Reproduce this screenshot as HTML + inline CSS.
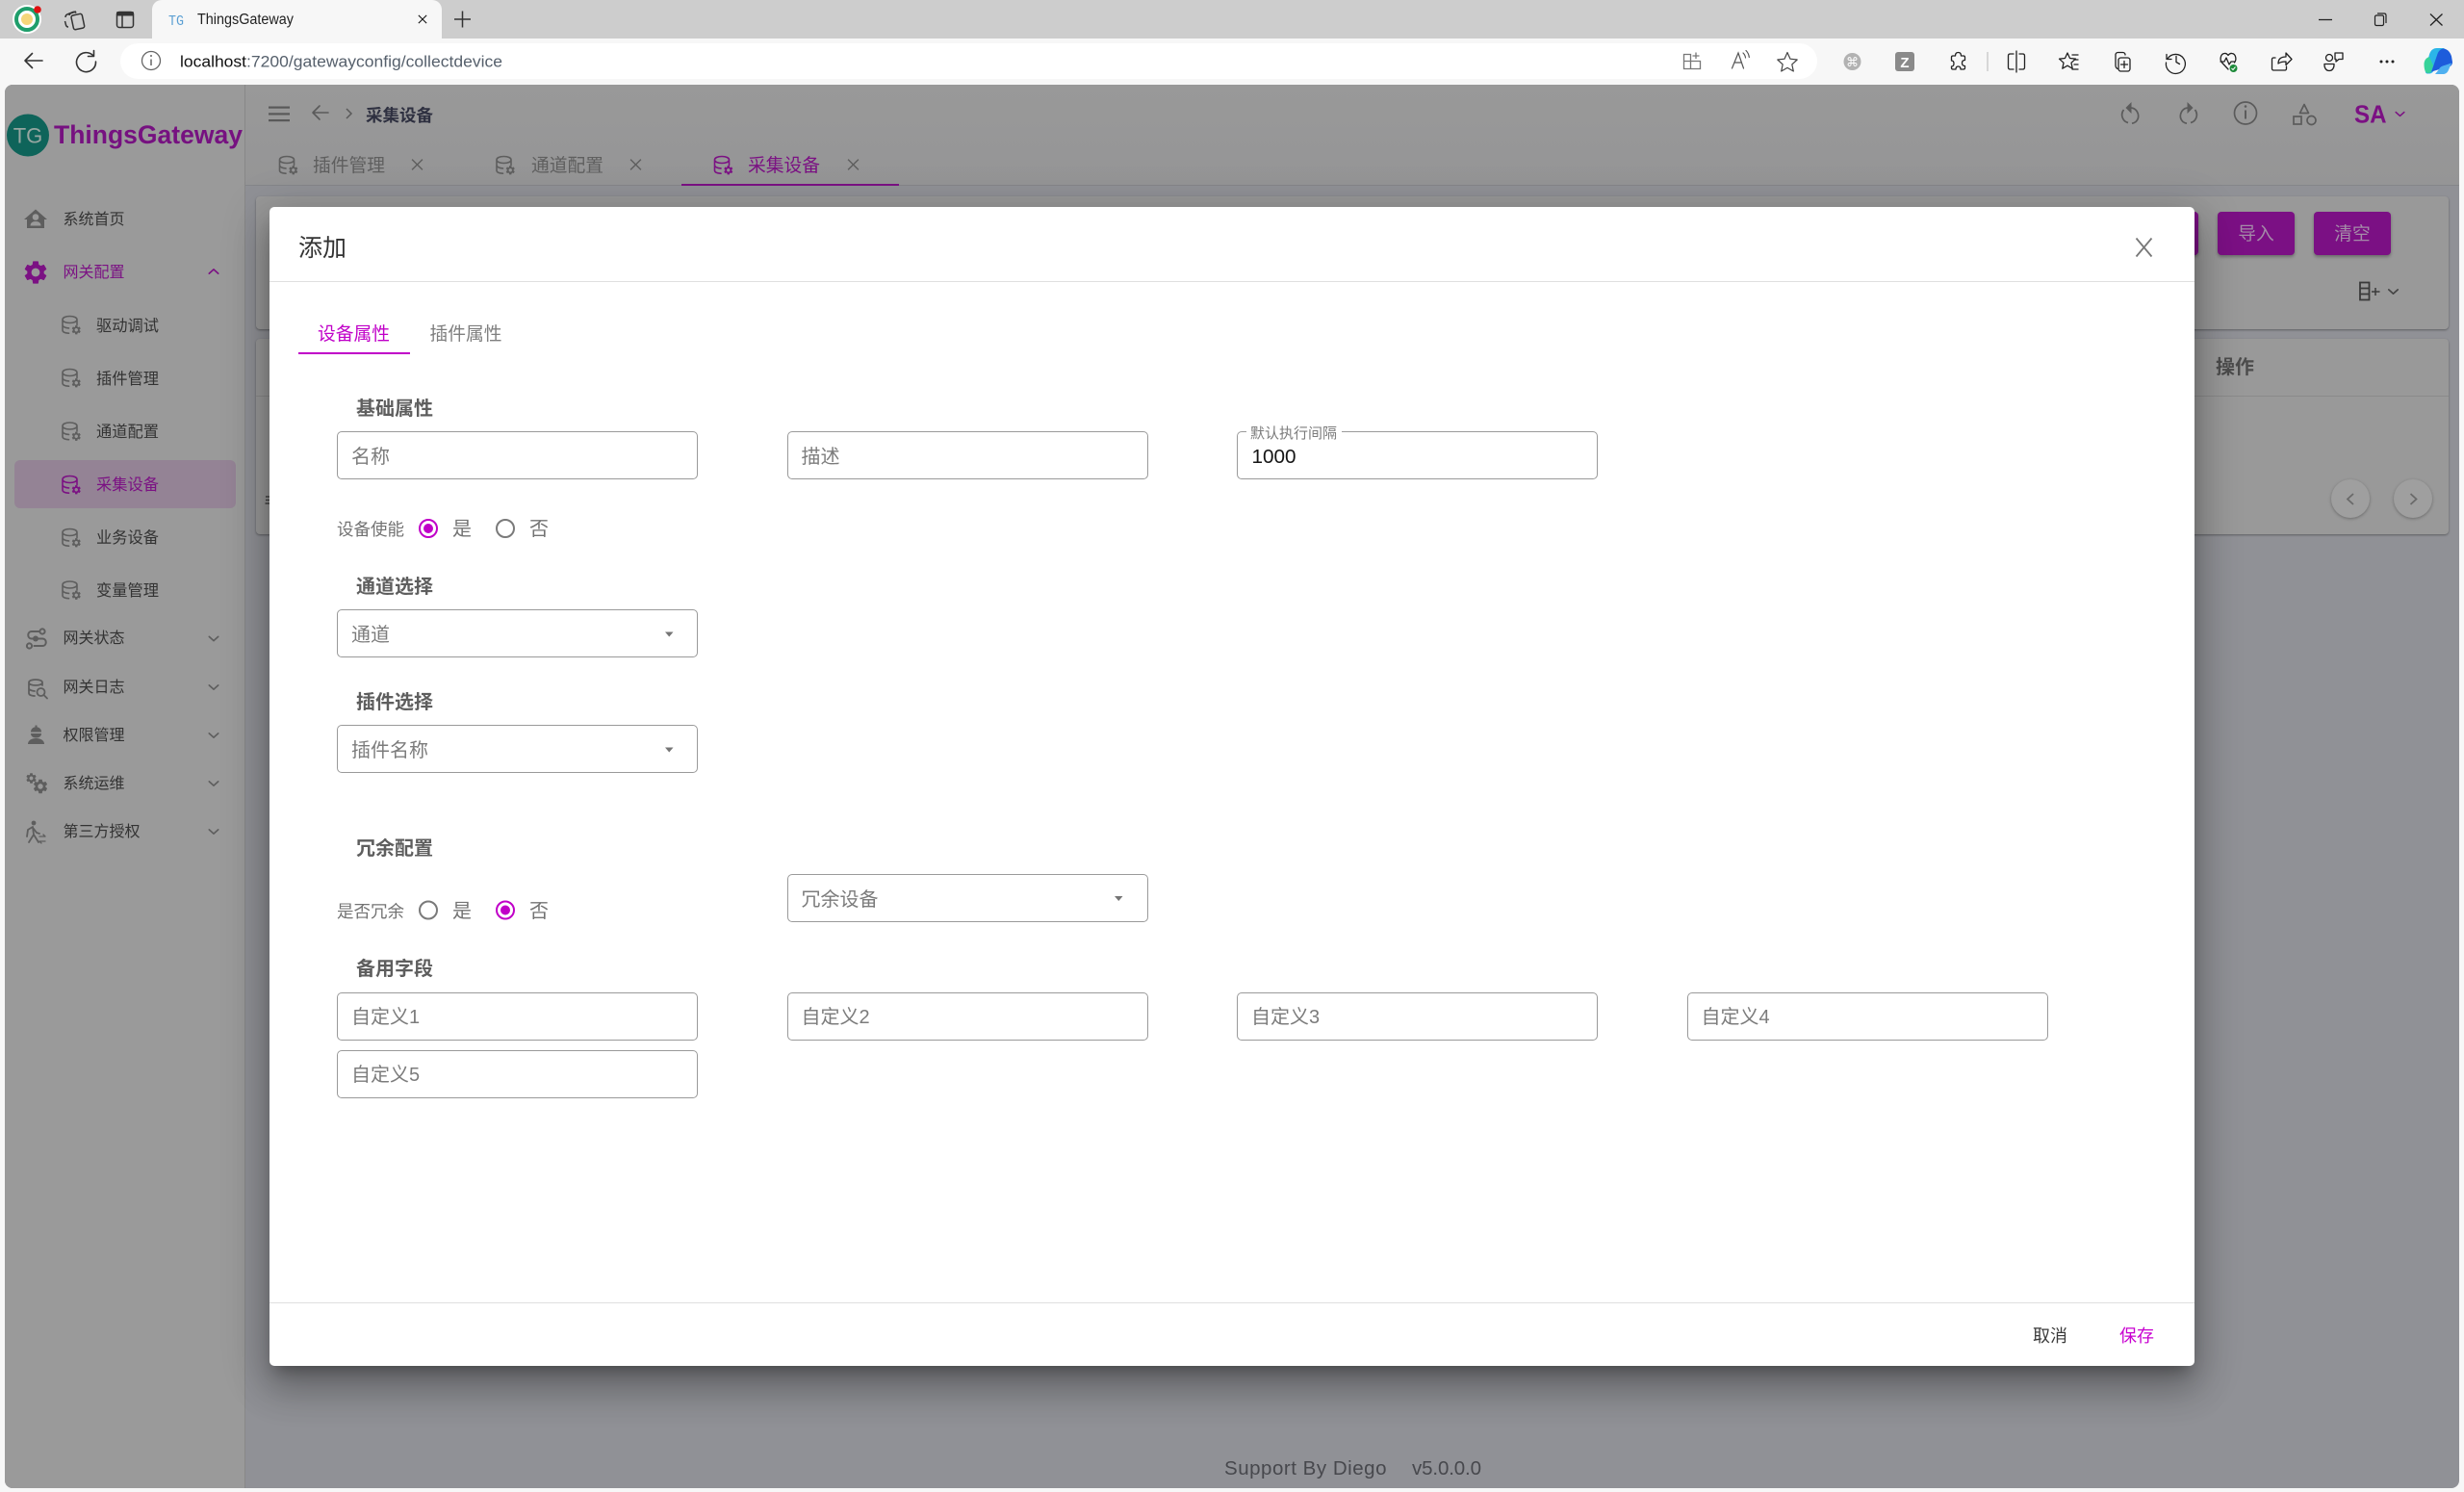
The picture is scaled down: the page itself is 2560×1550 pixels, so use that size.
<!DOCTYPE html>
<html lang="zh-CN">
<head>
<meta charset="utf-8">
<title>ThingsGateway</title>
<style>
*{box-sizing:border-box;margin:0;padding:0}
html,body{width:2560px;height:1550px;overflow:hidden;background:#f7f7f7;font-family:"Liberation Sans","Noto Sans CJK SC",sans-serif}
.a{position:absolute}
.t{position:absolute;white-space:nowrap;line-height:30px;height:30px;color:#333;font-size:16.25px;margin-top:.75px}
.bar{left:0;top:0;width:2560px;height:40px;background:#cdcdcd}
.tab{left:158px;top:0;width:301px;height:40px;background:#f7f7f7;border-radius:10px 10px 0 0}
.tool{left:0;top:40px;width:2560px;height:48px;background:#f7f7f7}
.addr{left:125px;top:45px;width:1763px;height:37px;background:#fff;border-radius:19px}
.app{left:5px;top:88px;width:2550px;height:1458px;background:#909196;border-radius:8px;overflow:hidden}
.side{left:5px;top:88px;width:250px;height:1458px;background:#9a9a9a;border-right:1px solid #888;border-radius:8px 0 0 8px}
.head{left:255px;top:88px;width:2300px;height:105px;background:linear-gradient(#999,#959596);border-bottom:1px solid #85868a;border-radius:0 8px 0 0}
.card{left:266px;width:2278px;background:#999;border-radius:4px;box-shadow:0 1px 2px rgba(0,0,0,.35)}
.on{left:15px;top:478px;width:230px;height:50px;background:#948395;border-radius:6px}
.nv{left:65.5px;font-size:16px}
.sb{left:100px}
.tb{font-size:18.75px;color:#5f5f5f}
.btn{top:220px;height:45px;background:#7b1084;border-radius:4px;box-shadow:0 2px 3px rgba(0,0,0,.3);color:#a48ba8;font-size:18.75px;text-align:center;line-height:46px}
.pg{width:40px;height:40px;border-radius:50%;background:#9f9f9f;box-shadow:0 1px 3px rgba(0,0,0,.3)}
.dlg{left:280px;top:215px;width:2000px;height:1204px;background:#fff;border-radius:5px;box-shadow:0 11px 15px -7px rgba(0,0,0,.3),0 24px 38px 3px rgba(0,0,0,.2),0 9px 46px 8px rgba(0,0,0,.16)}
.ln{height:1.5px;background:#e0e0e0;left:280px;width:2000px}
.box{position:absolute;height:50px;border:1.5px solid #9a9a9a;border-radius:5px;background:#fff;width:375px}
.ph{color:#7c7c7c;font-size:20px}
.h{color:#5e5e5e;font-size:20px;font-weight:700}
.lb{color:#737373;font-size:17.5px}
.op{color:#737373;font-size:20px}
</style>
</head>
<body>
<div class="a bar"></div>
<div class="a tab"></div>
<div class="a tool"></div>
<div class="a addr"></div>
<div class="a app"></div>
<div class="a head"></div>
<div class="a side"></div>
<div class="a card" style="top:204px;height:138px"></div>
<div class="a card" style="top:352px;height:203px"></div>
<div class="a" style="left:266px;top:411px;width:2278px;height:1px;background:#8a8a8a"></div>
<div class="a on"></div>

<!-- sidebar -->
<div class="t nv" style="top:213px">系统首页</div>
<div class="t nv" style="top:268px;color:#7b1183">网关配置</div>
<div class="t sb" style="top:323px">驱动调试</div>
<div class="t sb" style="top:378px">插件管理</div>
<div class="t sb" style="top:433.500px">通道配置</div>
<div class="t sb" style="top:488.500px;color:#7b1183">采集设备</div>
<div class="t sb" style="top:543.500px">业务设备</div>
<div class="t sb" style="top:598px">变量管理</div>
<div class="t nv" style="top:648px">网关状态</div>
<div class="t nv" style="top:699px">网关日志</div>
<div class="t nv" style="top:749px">权限管理</div>
<div class="t nv" style="top:799px">系统运维</div>
<div class="t nv" style="top:849px">第三方授权</div>

<!-- app header -->
<div class="t" style="left:380px;top:104.25px;font-size:17.5px;font-weight:700;color:#2e3040">采集设备</div>
<div class="t tb" style="left:325px;top:156px">插件管理</div>
<div class="t tb" style="left:552px;top:156px">通道配置</div>
<div class="t tb" style="left:777px;top:156px;color:#7b1183">采集设备</div>
<div class="a" style="left:708px;top:190.5px;width:226px;height:2px;background:#7b1183"></div>

<!-- toolbar buttons behind dialog -->
<div class="a btn" style="left:2240px;width:44px"></div>
<div class="a btn" style="left:2304px;width:80px">导入</div>
<div class="a btn" style="left:2404px;width:80px">清空</div>
<div class="t" style="left:2302px;top:366px;font-size:20px;font-weight:700;color:#4c4c4c">操作</div>
<div class="a pg" style="left:2422px;top:498px"></div>
<div class="a pg" style="left:2487px;top:498px"></div>

<!-- dialog -->
<div class="a dlg"></div>
<div class="a ln" style="top:291.5px"></div>
<div class="a ln" style="top:1352.5px"></div>
<div class="t" style="left:310px;top:242px;font-size:25px;color:#333">添加</div>
<div class="t" style="left:330px;top:331.25px;font-size:18.75px;color:#c000c8">设备属性</div>
<div class="t" style="left:446.5px;top:331.25px;font-size:18.75px;color:#7f7f7f">插件属性</div>
<div class="a" style="left:310px;top:365.5px;width:116px;height:2.5px;background:#c000c8"></div>

<div class="t h" style="left:370px;top:409px">基础属性</div>
<div class="box" style="left:350px;top:448px"></div>
<div class="t ph" style="left:365px;top:459px">名称</div>
<div class="box" style="left:818px;top:448px"></div>
<div class="t ph" style="left:832.5px;top:459px">描述</div>
<div class="box" style="left:1285px;top:448px"></div>
<div class="a" style="left:1295px;top:446px;width:99px;height:5px;background:#fff"></div>
<div class="t" style="left:1299px;top:435px;font-size:15px;color:#7c7c7c">默认执行间隔</div>
<div class="t" style="left:1300.5px;top:459px;font-size:20.7px;color:#151515">1000</div>

<div class="t lb" style="left:350px;top:534px">设备使能</div>
<div class="t op" style="left:470px;top:534px">是</div>
<div class="t op" style="left:550px;top:534px">否</div>

<div class="t h" style="left:370px;top:594px">通道选择</div>
<div class="box" style="left:350px;top:633px"></div>
<div class="t ph" style="left:365px;top:644px">通道</div>

<div class="t h" style="left:370px;top:714px">插件选择</div>
<div class="box" style="left:350px;top:753px"></div>
<div class="t ph" style="left:365px;top:764px">插件名称</div>

<div class="t h" style="left:370px;top:866px">冗余配置</div>
<div class="t lb" style="left:350px;top:931px">是否冗余</div>
<div class="t op" style="left:470px;top:931px">是</div>
<div class="t op" style="left:550px;top:931px">否</div>
<div class="box" style="left:818px;top:908px"></div>
<div class="t ph" style="left:832.5px;top:919px">冗余设备</div>

<div class="t h" style="left:370px;top:991px">备用字段</div>
<div class="box" style="left:350px;top:1031px"></div>
<div class="t ph" style="left:365px;top:1041px">自定义1</div>
<div class="box" style="left:818px;top:1031px"></div>
<div class="t ph" style="left:832.5px;top:1041px">自定义2</div>
<div class="box" style="left:1285px;top:1031px"></div>
<div class="t ph" style="left:1300px;top:1041px">自定义3</div>
<div class="box" style="left:1753px;top:1031px"></div>
<div class="t ph" style="left:1767.5px;top:1041px">自定义4</div>
<div class="box" style="left:350px;top:1091px"></div>
<div class="t ph" style="left:365px;top:1101px">自定义5</div>

<div class="t" style="left:2112px;top:1372.25px;font-size:18px;color:#3a3a3a">取消</div>
<div class="t" style="left:2202px;top:1372.25px;font-size:18px;color:#c800d0">保存</div>

<!-- icons + latin text -->
<svg class="a" style="left:0;top:0;pointer-events:none" width="2560" height="1550" viewBox="0 0 2560 1550" xmlns="http://www.w3.org/2000/svg">
<defs>
<symbol id="gear" viewBox="0 0 24 24"><path fill="currentColor" d="M19.14 12.94c.04-.3.06-.61.06-.94 0-.32-.02-.64-.07-.94l2.03-1.58a.49.49 0 0 0 .12-.61l-1.92-3.32a.488.488 0 0 0-.59-.22l-2.39.96c-.5-.38-1.03-.7-1.62-.94l-.36-2.54a.484.484 0 0 0-.48-.41h-3.84c-.24 0-.43.17-.47.41l-.36 2.54c-.59.24-1.13.57-1.62.94l-2.39-.96c-.22-.08-.47 0-.59.22L2.74 8.87c-.12.21-.08.47.12.61l2.03 1.58c-.05.3-.09.63-.09.94s.02.64.07.94l-2.03 1.58a.49.49 0 0 0-.12.61l1.92 3.32c.12.22.37.29.59.22l2.39-.96c.5.38 1.03.7 1.62.94l.36 2.54c.05.24.24.41.48.41h3.84c.24 0 .44-.17.47-.41l.36-2.54c.59-.24 1.13-.56 1.62-.94l2.39.96c.22.08.47 0 .59-.22l1.92-3.32c.12-.22.07-.47-.12-.61l-2.01-1.58zM12 15.6c-1.98 0-3.6-1.62-3.6-3.6s1.62-3.6 3.6-3.6 3.6 1.62 3.6 3.6-1.62 3.6-3.6 3.6z"/></symbol>
<symbol id="db" viewBox="0 0 21 21">
<path fill="none" stroke="currentColor" stroke-width="1.6" stroke-linecap="round" d="M1 4.5C1 2.5 4 1 8.5 1S16 2.5 16 4.5 13 8 8.5 8 1 6.5 1 4.5zM1 4.5v11c0 1.8 2.5 3 6.5 3.2M1 10c0 1.8 2.5 3.2 6.5 3.4M16 4.5V10"/>
<use href="#gear" x="9.5" y="9.5" width="11.5" height="11.5"/>
</symbol>
<symbol id="chev" viewBox="0 0 14 8"><path d="M1.5 1.5L7 6.5l5.5-5" fill="none" stroke="currentColor" stroke-width="1.9" stroke-linecap="round" stroke-linejoin="round"/></symbol>
<symbol id="cross" viewBox="0 0 12 12"><path d="M1 1l10 10M11 1L1 11" fill="none" stroke="currentColor" stroke-width="1.3"/></symbol>
</defs>

<!-- browser tab strip -->
<circle cx="28" cy="20" r="15" fill="#fff"/>
<circle cx="28" cy="20" r="11" fill="none" stroke="#1f9e6b" stroke-width="4"/>
<circle cx="28" cy="20" r="6" fill="#f6d67a"/>
<circle cx="39" cy="10" r="3.8" fill="#e01010"/>
<g fill="none" stroke="#333" stroke-width="1.5" stroke-linejoin="round">
<path d="M68 18c0-2 1-3 3-3.500l5-2c1.500-.5 2.500 0 3 1M71 28c-1 0-2-.5-2.500-2l-1-4"/>
<path d="M72 16c0-1.500 1-2 2-2.500l5-1.500"/>
<rect x="75" y="15" width="11.500" height="15" rx="2" transform="rotate(-12 81 22)"/>
<rect x="121.500" y="12.500" width="17" height="16" rx="2.500"/>
<path d="M127 16v12"/>
</g>
<rect x="121" y="12" width="18" height="4.500" rx="1.500" fill="#333"/>
<text x="175" y="26" font-family="Liberation Mono" font-size="15" fill="#5b9fd3" textLength="16" lengthAdjust="spacingAndGlyphs">TG</text>
<text x="205" y="25" font-family="Liberation Sans" font-size="15.500" fill="#222" textLength="100" lengthAdjust="spacingAndGlyphs">ThingsGateway</text>
<use href="#cross" x="434" y="15" width="10" height="10" color="#111"/>
<path d="M472 20h17M480.500 11.500v17" stroke="#333" stroke-width="1.500"/>

<!-- nav row -->
<g fill="none" stroke="#333" stroke-width="1.600" stroke-linecap="round" stroke-linejoin="round">
<path d="M44 63H26M33.500 55.500L26 63l7.500 7.500"/>
<path d="M97 58a10 10 0 1 0 2.500 6"/>
<path d="M97.500 52.500v6h-6"/>
</g>
<circle cx="157" cy="63" r="9.500" fill="none" stroke="#666" stroke-width="1.300"/>
<path d="M157 61.500v6.500" stroke="#666" stroke-width="1.500"/><circle cx="157" cy="58" r="1" fill="#666"/>
<text x="187" y="69.500" font-family="Liberation Sans" font-size="17" fill="#111" textLength="69" lengthAdjust="spacingAndGlyphs">localhost</text>
<text x="256" y="69.500" font-family="Liberation Sans" font-size="17" fill="#56606c" textLength="266" lengthAdjust="spacingAndGlyphs">:7200/gatewayconfig/collectdevice</text>

<!-- right toolbar icons -->
<g fill="none" stroke="#777" stroke-width="1.300">
<path d="M1749.500 56.500h7v7h-7zM1749.500 63.500h7v8h-7zM1756.500 63.500h10v8h-10z"/>
<path d="M1762 54.500v6.500M1758.500 58h7"/>
</g>
<g fill="none" stroke="#555" stroke-width="1.200" stroke-linecap="round">
<path d="M1799.500 71l6.500-16 5.500 16M1802 65h7.500"/>
<path d="M1811 55c1.500 1.500 2.300 3 2.500 5M1814 52.500c2 2 3 4 3.300 7"/>
</g>
<path d="M1857 54.500l3 6.700 7.200.8-5.400 4.900 1.500 7.100-6.300-3.600-6.300 3.600 1.500-7.100-5.400-4.900 7.200-.8z" fill="none" stroke="#444" stroke-width="1.200" stroke-linejoin="round"/>
<circle cx="1924.500" cy="64" r="9" fill="#b2b2b2"/>
<text x="1924.500" y="69" text-anchor="middle" font-family="DejaVu Sans" font-size="13" fill="#fff">⌘</text>
<rect x="1969" y="54" width="20" height="20" rx="3" fill="#8a8a8a"/>
<text x="1979" y="70" text-anchor="middle" font-family="Liberation Sans" font-weight="700" font-size="15" fill="#fff">Z</text>
<g fill="none" stroke="#222" stroke-width="1.300" stroke-linejoin="round" stroke-linecap="round">
<path d="M2029 58h2.500c0-2 1-3.500 3-3.500s3 1.500 3 3.500h2.500c1 0 1.500.5 1.500 1.500v3c-2 0-3 1-3 3s1 3 3 3v2c0 1-.5 1.500-1.500 1.500h-3c0-2-1-3-2.500-3s-2.500 1-2.500 3H2029c-1 0-1.500-.5-1.500-1.500V69c1.500 0 2.500-1 2.500-3s-1-3-2.500-3v-3.500c0-1 .5-1.500 1.500-1.500z"/>
<path d="M2092 56h-3.500c-1.500 0-2 .7-2 2v12c0 1.300.5 2 2 2h3.500M2098 56h3.500c1.500 0 2 .7 2 2v12c0 1.300-.5 2-2 2h-3.500M2095 53v22"/>
<path d="M2148 55l2.500 5.500 6 .7-4.500 4 1.200 6-5.200-3-5.200 3 1.200-6-4.500-4 6-.7zM2153 57h6M2155 62h4M2153 72h6M2155 67h4"/>
<path d="M2198 60v-3c0-1.500 1-2.500 2.500-2.500h5c1.500 0 2.500 1 2.500 2.500M2198 60v8c0 1.500.5 2.500 2 3.500"/>
<rect x="2201" y="60" width="12" height="14" rx="2.500"/>
<path d="M2207 63.500v7M2203.500 67h7"/>
<path d="M2251 56.500v5h5M2252 61a10 10 0 1 1-1.500 4M2261 58.500v6l3.500 2"/>
<path d="M2315 72l-6.500-7c-2.500-3-1.500-9 2.500-9.500 2-.3 3.200.8 4 2 .8-1.200 2-2.300 4-2 4 .5 5 6.500 2.500 9.500M2307 64h4l2-4 3 7 2-3h4"/>
<path d="M2364 60h-2c-.8 0-1.500.7-1.500 1.500v10c0 .8.700 1.500 1.500 1.500h12c.8 0 1.500-.7 1.500-1.500V69M2367 66c0-5 3-7 8-7v-4l6 6.500-6 6V64c-3.500 0-6 .5-8 2z"/>
<circle cx="2420" cy="60" r="3.500"/>
<path d="M2415 66.500h10v1c0 3.500-2 6-5 6s-5-2.500-5-6zM2426 55h8v6.500h-4l-3 2.500v-2.500h-1z"/>
</g>
<circle cx="2320.500" cy="71" r="4" fill="#1d8a3a"/>
<path d="M2318.500 71l1.500 1.500 2.500-3" stroke="#fff" stroke-width="1" fill="none"/>
<path d="M2065 54v20" stroke="#ccc" stroke-width="1.500"/>
<g fill="#222"><circle cx="2474" cy="64" r="1.500"/><circle cx="2480" cy="64" r="1.500"/><circle cx="2486" cy="64" r="1.500"/></g>
<!-- copilot -->
<path d="M2528 51c1.500-1 3.500-1 5-1h7c-3 1-4.500 3-5.500 6l-5 15c-.8 2.500-2 5-5 5.500h-2.500c-2 0-2.500-2-2-4l4-16c.8-2.500 2-4.500 4-5.500z" fill="#2bb6e8"/>
<path d="M2521 76c3 .5 5-.8 6-4l5.500-16c1-3 3-5 6-5.500 3 0 7 2.500 8.500 8l1 6c0 3-2 5-5 5" fill="#1d5cdb"/>
<path d="M2518.500 66c0 4 .5 8 2.500 9.500 1.500 1 4 .5 5-1.500l2-6-4-9c-3 1-5 3-5.500 7z" fill="#37d39a"/>
<path d="M2530 77h8c3 0 5-1.500 6-4.500l3-7-9 3c-2 .7-3.500 2-4.300 4z" fill="#4fb0f0"/>

<!-- window controls -->
<path d="M2409 20.500h14" stroke="#222" stroke-width="1.300"/>
<g fill="none" stroke="#222" stroke-width="1.200"><rect x="2467.500" y="16" width="9" height="10.500" rx="1.500"/><path d="M2470 14h7c1.500 0 2 .5 2 2v8"/></g>
<path d="M2525 14.500l12.500 12M2537.500 14.500l-12.500 12" stroke="#222" stroke-width="1.300"/>

<!-- logo -->
<circle cx="29" cy="140.500" r="22" fill="#0e645a"/>
<text x="29" y="148.500" text-anchor="middle" font-family="Liberation Sans" font-size="22" fill="#96a6a1">TG</text>
<text x="56" y="149" font-family="Liberation Sans" font-weight="700" font-size="26.500" fill="#761180" textLength="196" lengthAdjust="spacingAndGlyphs">ThingsGateway</text>

<!-- header icons -->
<rect x="279" y="110.500" width="22" height="2.200" fill="#595959"/>
<rect x="279" y="117.300" width="22" height="2.200" fill="#595959"/>
<rect x="279" y="124" width="22" height="2.200" fill="#595959"/>
<path d="M341 117h-15M332 110l-7 7 7 7" fill="none" stroke="#5a5a5a" stroke-width="1.600" stroke-linecap="round" stroke-linejoin="round"/>
<path d="M360 113l5 5-5 5" fill="none" stroke="#5a5a5a" stroke-width="1.500"/>

<use href="#db" x="289.500" y="161.500" width="21" height="21" color="#5e5e5e"/>
<use href="#db" x="515" y="161.500" width="21" height="21" color="#5e5e5e"/>
<use href="#db" x="741.500" y="161.500" width="21" height="21" color="#7b1183"/>
<use href="#cross" x="427" y="164.500" width="13" height="13" color="#5e5e5e"/>
<use href="#cross" x="654" y="164.500" width="13" height="13" color="#5e5e5e"/>
<use href="#cross" x="880" y="164.500" width="13" height="13" color="#5e5e5e"/>

<g fill="none" stroke="#5b5b5b" stroke-width="1.700">
<path d="M2214.500 112a8.500 8.500 0 0 1 4.500 14.500c-1.300 1-2.700 1.500-4 1.700"/>
<path d="M2211 127.500a8.500 8.500 0 0 1-4.500-13.500"/>
<path d="M2214.500 106v12l-6-6z" fill="#5b5b5b" stroke="none"/>
<path d="M2272.500 112a8.500 8.500 0 0 0-4.500 14.500c1.300 1 2.700 1.500 4 1.700"/>
<path d="M2276 127.500a8.500 8.500 0 0 0 4.500-13.500"/>
<path d="M2272.500 106v12l6-6z" fill="#5b5b5b" stroke="none"/>
<circle cx="2333" cy="117.500" r="11.500"/>
<path d="M2333 114.500v9" stroke-width="2"/>
<path d="M2394 108.500l-4.500 9h9z" stroke-linejoin="round"/>
<rect x="2383" y="121" width="8" height="8"/>
<circle cx="2401.500" cy="125" r="4.500"/>
</g>
<circle cx="2333" cy="110.500" r="1.300" fill="#5b5b5b"/>
<text x="2446" y="127.500" font-family="Liberation Sans" font-weight="700" font-size="25.500" fill="#7b1083" textLength="33.500" lengthAdjust="spacingAndGlyphs">SA</text>
<use href="#chev" x="2488" y="115" width="11" height="7" color="#7b1083"/>

<!-- table toolbar icon -->
<g fill="none" stroke="#3a3a3a" stroke-width="1.800"><rect x="2452" y="293.500" width="9.500" height="18"/><path d="M2452 299.500h9.500M2452 305.500h9.500"/></g>
<path d="M2464 303h8.500M2468 299v8" stroke="#3a3a3a" stroke-width="1.500"/>
<use href="#chev" x="2480.500" y="299.500" width="12" height="7" color="#444"/>
<path d="M2445 513l-6 5.500 6 5.500" fill="none" stroke="#6a6a6a" stroke-width="1.800"/>
<path d="M2504.500 513l6 5.500-6 5.500" fill="none" stroke="#6a6a6a" stroke-width="1.800"/>
<path d="M276 516h4M276 519.500h4M275.500 523h4.500" stroke="#333" stroke-width="1.400"/>

<!-- sidebar icons -->
<g transform="translate(37 228)">
<path d="M0-10.500L-12 0l3 0v9H9V0l3 0z" fill="#5e5e5e"/>
<circle cx="0" cy="-2.500" r="3.300" fill="#9a9a9a"/>
<path d="M-5.500 6.500c0-3 2.500-4.500 5.500-4.500s5.500 1.500 5.500 4.500z" fill="#9a9a9a"/>
</g>
<use href="#gear" x="22.500" y="268.500" width="29" height="29" color="#7b1183"/>
<use href="#chev" x="216" y="278.500" width="12" height="7" color="#7b1183" transform="rotate(180 222 282)"/>
<use href="#db" x="64" y="327.500" width="21" height="21" color="#5e5e5e"/>
<use href="#db" x="64" y="382.500" width="21" height="21" color="#5e5e5e"/>
<use href="#db" x="64" y="438" width="21" height="21" color="#5e5e5e"/>
<use href="#db" x="64" y="493.500" width="21" height="21" color="#7b1183"/>
<use href="#db" x="64" y="548.500" width="21" height="21" color="#5e5e5e"/>
<use href="#db" x="64" y="603" width="21" height="21" color="#5e5e5e"/>

<g fill="none" stroke="#5e5e5e" stroke-width="2" stroke-linecap="round">
<circle cx="44" cy="656" r="2.600"/>
<path d="M41 656H33c-5 0-5 7.500 0 7.500h11c5 0 5 7.500 0 7.500h-8.500"/>
<circle cx="30.500" cy="671" r="2.600"/>
</g>
<circle cx="37" cy="663.500" r="3" fill="#5e5e5e"/>
<g fill="none" stroke="#5e5e5e" stroke-width="1.800" stroke-linecap="round">
<path d="M30 709c0-1.800 3-3 7-3s7 1.200 7 3-3 3-7 3-7-1.200-7-3zM30 709v11c0 1.800 2.500 2.800 6 3M30 715c0 1.500 2.500 2.800 6 3M44 709v3"/>
<circle cx="42.500" cy="719" r="4"/>
<path d="M45.500 722l3.500 3.500"/>
</g>
<g fill="#5e5e5e">
<path d="M32 760.500c0-3 2.200-5.200 5.500-5.200s5.500 2.200 5.500 5.200z"/>
<rect x="36.500" y="753.500" width="2" height="5"/>
<path d="M32 762h11c0 3-2.500 4.500-5.500 4.500S32 765 32 762z"/>
<path d="M29 773c0-4 4-6 8.500-6s8.500 2 8.500 6z"/>
</g>
<use href="#gear" x="26" y="802" width="13" height="13" color="#5e5e5e"/>
<use href="#gear" x="33" y="808" width="18" height="18" color="#5e5e5e"/>
<g fill="none" stroke="#5e5e5e" stroke-width="1.800" stroke-linecap="round" stroke-linejoin="round">
<circle cx="35" cy="855" r="1.500" fill="#5e5e5e"/>
<path d="M34 859l-5 3-1 7M34 859l1 8-5 8M35 867l5 8M35 861l3 4 3 1"/>
<path d="M41 869h6M45 867l2 2M47 874h-6M43 876l-2-2" stroke-width="1.300"/>
</g>
<use href="#chev" x="216" y="660" width="12" height="7" color="#5e5e5e"/>
<use href="#chev" x="216" y="710.500" width="12" height="7" color="#5e5e5e"/>
<use href="#chev" x="216" y="760.500" width="12" height="7" color="#5e5e5e"/>
<use href="#chev" x="216" y="810.500" width="12" height="7" color="#5e5e5e"/>
<use href="#chev" x="216" y="860.500" width="12" height="7" color="#5e5e5e"/>

<!-- dialog icons -->
<path d="M2219.500 247.500l16 19M2235.500 247.500l-16 19" stroke="#777" stroke-width="1.800"/>
<g fill="none" stroke-width="2">
<circle cx="445" cy="549" r="9" stroke="#c000c8"/>
<circle cx="525" cy="549" r="9" stroke="#7a7a7a"/>
<circle cx="445" cy="945.500" r="9" stroke="#7a7a7a"/>
<circle cx="525" cy="945.500" r="9" stroke="#c000c8"/>
</g>
<circle cx="445" cy="549" r="5" fill="#c000c8"/>
<circle cx="525" cy="945.500" r="5" fill="#c000c8"/>
<g fill="#757575">
<path d="M691 656.500h8.500l-4.250 5z"/>
<path d="M691 776.500h8.500l-4.250 5z"/>
<path d="M1158 931h8.500l-4.250 5z"/>
</g>

<!-- footer -->
<text x="1272" y="1532" font-family="Liberation Sans" font-size="20.500" fill="#47484d" textLength="168.500" lengthAdjust="spacing">Support By Diego</text>
<text x="1467" y="1532" font-family="Liberation Sans" font-size="20.500" fill="#47484d" textLength="72" lengthAdjust="spacing">v5.0.0.0</text>
</svg>
</body>
</html>
